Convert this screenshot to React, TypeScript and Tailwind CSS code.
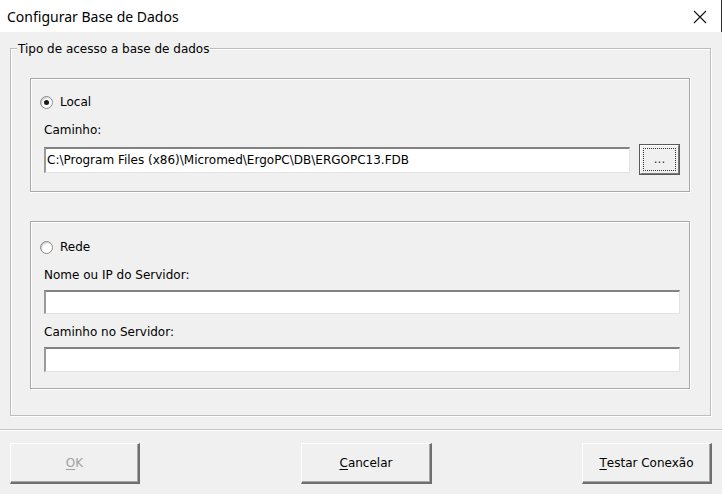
import React from 'react';

const ui = { fontFamily: '"DejaVu Sans", Tahoma, sans-serif' };

function Radio({ checked, label }: { checked?: boolean; label: string }) {
  return (
    <div className="flex items-center h-[16px] gap-[7px] mt-[1px]">
      <span className="w-[13px] h-[13px] rounded-full border border-[#8a8a8a] bg-white flex items-center justify-center shadow-[inset_1px_1px_1px_#c8c8c8]">
        {checked && <span className="w-[5px] h-[5px] rounded-full bg-[#1a1a1a]"></span>}
      </span>
      <span className="text-[12px] text-black">{label}</span>
    </div>
  );
}

function Field({ value, h }: { value?: string; h: string }) {
  return (
    <div
      className={`${h} flex-1 bg-white border-t-2 border-l-2 border-t-[#828282] border-l-[#9a9a9a] border-r border-b border-r-[#e3e3e3] border-b-[#e3e3e3] flex items-center pl-[1px] text-[12px] text-black whitespace-nowrap overflow-hidden`}
    >
      {value}
    </div>
  );
}

function Button({ label, mn, disabled, w }: { label: string; mn: string; disabled?: boolean; w: string }) {
  const rest = label.slice(mn.length);
  return (
    <button
      className={`${w} h-[41px] bg-[#f0f0f0] border-t border-l border-t-white border-l-white border-r-2 border-b-2 border-r-[#6f6f6f] border-b-[#6f6f6f] shadow-[inset_-1px_-1px_0_#a8a8a8] text-[12px] flex items-center justify-center ${disabled ? 'text-[#a0a0a0]' : 'text-black'}`}
    >
      <span className="underline underline-offset-2">{mn}</span>
      {rest}
    </button>
  );
}

export default function App() {
  return (
    <div className="w-[722px] h-[494px] bg-[#f0f0f0] flex flex-col" style={ui}>
      <div className="h-[32px] bg-white flex items-center justify-between pl-[7px] pr-[14px] border-r border-r-[#2b2b2b]">
        <span className="text-[14px] text-black" style={{ fontFamily: '"Noto Sans", "Open Sans", sans-serif' }}>
          Configurar Base de Dados
        </span>
        <svg width="14" height="14" viewBox="0 0 14 14" className="mt-[1px]">
          <path d="M1 1 L13 13 M13 1 L1 13" stroke="#111" strokeWidth="1.1" fill="none" />
        </svg>
      </div>

      <div className="px-[10px] pt-[16px] pr-[11px]">
        <div className="relative border border-[#bdbdbd] shadow-[inset_1px_1px_0_#ffffff,1px_1px_0_#ffffff] h-[368px] pt-[29px] px-[19px]">
          <span className="absolute -top-[9px] left-[6px] px-[1px] bg-[#f0f0f0] text-[12px] text-black">
            Tipo de acesso a base de dados
          </span>

          <div className="flex flex-col gap-[29px] mr-[1px]">
            <div className="h-[114px] border border-[#a9a9a9] shadow-[1px_1px_0_#ffffff,inset_1px_1px_0_#ffffff] pt-[14px] pl-[9px] pr-[9px]">
              <Radio checked label="Local" />
              <div className="pl-[4px] mt-[12px] text-[12px] text-black h-[16px] leading-[16px]">Caminho:</div>
              <div className="pl-[4px] mt-[6px] flex items-center gap-[9px]">
                <Field h="h-[26px]" value="C:\Program Files (x86)\Micromed\ErgoPC\DB\ERGOPC13.FDB" />
                <div className="w-[41px] h-[31px] border border-[#5a5a5a] flex">
                  <div className="flex-1 border-r border-b border-r-[#7a7a7a] border-b-[#7a7a7a] border-t border-l border-t-white border-l-white p-[2px] flex">
                    <div className="flex-1 border border-dotted border-[#333] flex items-center justify-center text-[12px] text-[#333] leading-none pb-[2px]">
                      ...
                    </div>
                  </div>
                </div>
              </div>
            </div>

            <div className="h-[168px] border border-[#a9a9a9] shadow-[1px_1px_0_#ffffff,inset_1px_1px_0_#ffffff] pt-[16px] pl-[9px] pr-[9px]">
              <Radio label="Rede" />
              <div className="pl-[4px] mt-[12px] text-[12px] text-black h-[16px] leading-[16px]">Nome ou IP do Servidor:</div>
              <div className="pl-[4px] mt-[7px] flex">
                <Field h="h-[24px]" />
              </div>
              <div className="pl-[4px] mt-[10px] text-[12px] text-black h-[16px] leading-[16px]">Caminho no Servidor:</div>
              <div className="pl-[4px] mt-[7px] flex">
                <Field h="h-[25px]" />
              </div>
            </div>
          </div>
        </div>
      </div>

      <div className="mt-[13px] h-[2px] border-t border-t-[#c4c4c4] border-b border-b-white"></div>

      <div className="flex px-[10px] mt-[12px]">
        <Button label="OK" mn="O" disabled w="w-[130px]" />
        <div className="ml-[161px]">
          <Button label="Cancelar" mn="C" w="w-[131px]" />
        </div>
        <div className="ml-[150px]">
          <Button label="Testar Conexão" mn="T" w="w-[130px]" />
        </div>
      </div>
    </div>
  );
}
